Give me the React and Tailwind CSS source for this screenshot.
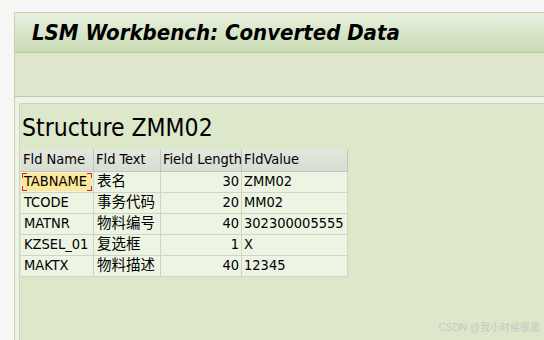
import React from "react";

const rows = [
  ["TABNAME", "表名", "30", "ZMM02"],
  ["TCODE", "事务代码", "20", "MM02"],
  ["MATNR", "物料编号", "40", "302300005555"],
  ["KZSEL_01", "复选框", "1", "X"],
  ["MAKTX", "物料描述", "40", "12345"],
];

const font = { fontFamily: '"DejaVu Sans Condensed", "DejaVu Sans", "Noto Sans CJK SC", sans-serif' };

export default function App() {
  return (
    <div className="w-[544px] h-[340px] bg-[#f6f7f4] pt-[12px] pl-[14px] overflow-hidden relative" style={font}>
      <div className="h-full border-l border-t border-[#c3d2b4] flex flex-col">
        <div className="h-[40px] bg-gradient-to-b from-[#e8f0df] to-[#c9dcb2] border-b border-[#b7c9a3] flex items-center pl-[17px]">
          <span className="text-[22px] font-bold italic text-black">LSM Workbench: Converted Data</span>
        </div>
        <div className="h-[44px] bg-[#dfe8cd] border-b border-[#bccdab]"></div>
        <div className="flex-1 bg-[#eef3e7] pl-[4px] pt-[6px] flex flex-col">
          <div className="flex-1 bg-[#dde8ca] border-l border-t border-[#cad7b9] pl-[1px]">
            <div className="text-[24.5px] leading-[28px] text-black pl-[1px] pt-[10px] pb-[7px]">Structure ZMM02</div>
            <div className="grid grid-cols-[73px_67px_81px_106px] w-[327px] text-[14.5px] text-black whitespace-nowrap">
              {["Fld Name", "Fld Text", "Field Length", "FldValue"].map((h) => (
                <div key={h} className="h-[23px] bg-gradient-to-b from-[#e4e7df] to-[#d8ddd2] border-r border-b border-[#c0c7b8] pl-[2px] flex items-center">{h}</div>
              ))}
              {rows.map((r, ri) => (
                <React.Fragment key={ri}>
                  <div className="h-[21px] bg-[#edf4e3] border-r border-b border-[#cbd8bd] flex items-center relative">
                    {ri === 0 ? (
                      <div className="absolute inset-[1px] bg-[#fde79a] pl-[2px] flex items-center">
                        <span className="absolute left-0 top-0 w-[5px] h-[5px] border-l border-t border-[#e02020]"></span>
                        <span className="absolute right-0 top-0 w-[5px] h-[5px] border-r border-t border-[#e02020]"></span>
                        <span className="absolute left-0 bottom-0 w-[5px] h-[5px] border-l border-b border-[#e02020]"></span>
                        <span className="absolute right-0 bottom-0 w-[5px] h-[5px] border-r border-b border-[#e02020]"></span>
                        {r[0]}
                      </div>
                    ) : (
                      <span className="pl-[3px]">{r[0]}</span>
                    )}
                  </div>
                  <div className="h-[21px] bg-[#edf4e3] border-r border-b border-[#cbd8bd] pl-[3px] flex items-center">{r[1]}</div>
                  <div className="h-[21px] bg-[#edf4e3] border-r border-b border-[#cbd8bd] pr-[2px] flex items-center justify-end">{r[2]}</div>
                  <div className="h-[21px] bg-[#edf4e3] border-r border-b border-[#cbd8bd] pl-[2px] flex items-center">{r[3]}</div>
                </React.Fragment>
              ))}
            </div>
          </div>
        </div>
      </div>
      <div className="absolute right-[4px] bottom-[5px] text-[10px] text-[#c4c8c0]" style={{ fontFamily: '"Liberation Sans", "Noto Sans CJK SC", sans-serif' }}>CSDN @我小时候很黑</div>
    </div>
  );
}
